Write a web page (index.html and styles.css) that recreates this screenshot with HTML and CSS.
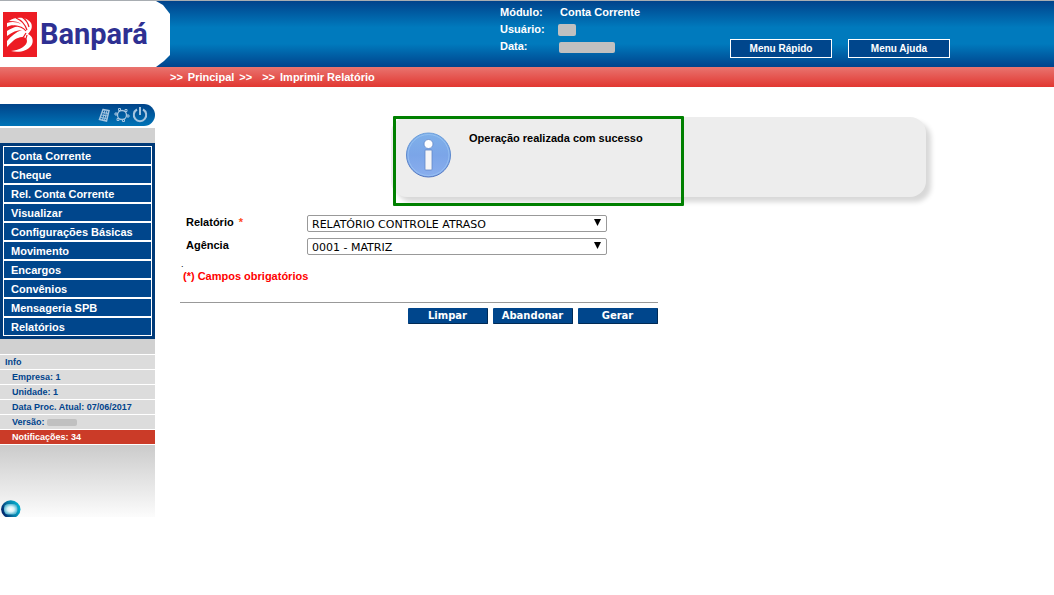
FILE: index.html
```html
<!DOCTYPE html>
<html lang="pt-BR">
<head>
<meta charset="utf-8">
<meta name="viewport" content="width=device-width, initial-scale=1">
<title>Banpará - Imprimir Relatório</title>
<link rel="stylesheet" href="styles.css">
</head>
<body>
<header class="header">
  <div class="brand">
    <svg class="brand-mark" viewBox="0 0 34 45" aria-hidden="true">
      <rect width="34" height="45" fill="#ed1c24"/>
      <path d="M6 9C13 4 24 5 28 11c2 4 0 8-3 11 5 2 6 8 3 12-4 5-12 7-20 5 9-1 16-5 16-10 0-4-5-5-9-3-4 1-7 5-11 9v-6c4-5 9-9 15-11-5 0-10 2-15 6v-5c3-2 7-4 11-5-4-1-8-1-11 1v-4c5-2 10-1 14 1-2-2-6-3-12-3z" fill="#fff"/>
      <path d="M13 6c5 2 9 6 11 12M19 5c3 2 6 6 7 10M11 14c5 0 9 1 12 5M12 31c5-2 9-6 11-10M13 37c6-3 10-7 11-14" fill="none" stroke="#ed1c24" stroke-width="1.200"/>
    </svg>
    <span class="brand-name">Banpará</span>
  </div>
  <dl class="session">
    <dt>Módulo:</dt><dd>Conta Corrente</dd>
    <dt>Usuário:</dt><dd><span class="mask mask-user"></span></dd>
    <dt>Data:</dt><dd><span class="mask mask-date"></span></dd>
  </dl>
  <div class="quick">
    <button type="button" class="quick-button">Menu Rápido</button>
    <button type="button" class="quick-button">Menu Ajuda</button>
  </div>
</header>
<nav class="crumbs" aria-label="Navegação">
  <span>&gt;&gt;</span><a href="#">Principal</a><span>&gt;&gt;</span>
  <span class="crumb-next">&gt;&gt;</span><a href="#">Imprimir Relatório</a>
</nav>
<div class="layout">
  <aside class="sidebar">
    <div class="tools">
      <button type="button" class="tool" aria-label="Calculadora">
        <svg viewBox="0 0 16 16"><path d="M7 2.500l6 1-2.500 10.500-7-1.500z" fill="none" stroke="currentColor" stroke-width="1.500"/><path d="M6.500 5.500l6 1M5.500 8l6 1M4.500 10.500l6 1M9 3L6.500 13M11 3.500L8.500 13.500" stroke="currentColor"/></svg>
      </button>
      <button type="button" class="tool" aria-label="Configurações">
        <svg viewBox="0 0 16 16" fill="none" stroke="currentColor"><circle cx="8" cy="8" r="4.500" stroke-width="1.300"/><path d="M4.500 1.500h2v2h-2zM11 2.500h2v2h-2zM13 8h2v2h-2zM8.500 12.500h2v2h-2zM3 11.500h2v2H3zM1 6h2v2H1z"/></svg>
      </button>
      <button type="button" class="tool" aria-label="Sair">
        <svg viewBox="0 0 16 16" fill="none" stroke="currentColor" stroke-width="2"><path d="M5 2.500a6.200 6.200 0 1 0 6 0M8 0v8"/></svg>
      </button>
    </div>
    <div class="band"></div>
    <ul class="menu">
      <li><a href="#">Conta Corrente</a></li>
      <li><a href="#">Cheque</a></li>
      <li><a href="#">Rel. Conta Corrente</a></li>
      <li><a href="#">Visualizar</a></li>
      <li><a href="#">Configurações Básicas</a></li>
      <li><a href="#">Movimento</a></li>
      <li><a href="#">Encargos</a></li>
      <li><a href="#">Convênios</a></li>
      <li><a href="#">Mensageria SPB</a></li>
      <li><a href="#">Relatórios</a></li>
    </ul>
    <div class="band"></div>
    <ul class="info">
      <li class="info-title">Info</li>
      <li>Empresa: 1</li>
      <li>Unidade: 1</li>
      <li>Data Proc. Atual: 07/06/2017</li>
      <li>Versão: <span class="mask mask-version"></span></li>
      <li class="info-alert"><a href="#">Notificações: 34</a></li>
    </ul>
    <div class="fade">
      <svg class="orb" viewBox="0 0 20 20" aria-hidden="true">
        <defs>
          <linearGradient id="orb-ring" x1="0" y1=".7" x2="1" y2=".3"><stop offset="0" stop-color="#001a66"/><stop offset=".5" stop-color="#087ba5"/><stop offset="1" stop-color="#00b5d4"/></linearGradient>
          <radialGradient id="orb-core"><stop offset="0" stop-color="#fff"/><stop offset=".5" stop-color="#d7f3f8"/><stop offset="1" stop-color="#5db9d3"/></radialGradient>
        </defs>
        <ellipse cx="9.800" cy="10.300" rx="9.700" ry="9" fill="url(#orb-ring)"/>
        <rect x="3" y="5" width="13.500" height="10.500" rx="4.500" fill="url(#orb-core)"/>
      </svg>
    </div>
  </aside>
  <main class="content">
    <section class="message" role="status">
      <svg class="message-icon" viewBox="0 0 46 46" aria-hidden="true">
        <defs>
          <linearGradient id="info-fill" x1="0" y1="0" x2="0" y2="1"><stop offset="0" stop-color="#7fb0e9"/><stop offset=".5" stop-color="#7ba5e8"/><stop offset="1" stop-color="#8aaeee"/></linearGradient>
          <linearGradient id="info-edge" x1="0" y1="0" x2="0" y2="1"><stop offset="0" stop-color="#6b9fdc"/><stop offset="1" stop-color="#4d72bd"/></linearGradient>
        </defs>
        <circle cx="22.500" cy="23" r="22" fill="url(#info-fill)" stroke="url(#info-edge)"/>
        <circle cx="22.500" cy="23" r="20.500" fill="none" stroke="#9cc8f3" stroke-opacity=".7"/>
        <circle cx="22.500" cy="12" r="4.500" fill="#fff" stroke="#6288c8" stroke-width=".8"/>
        <rect x="19" y="18" width="7" height="20" rx=".8" fill="#f5f5f7" stroke="#6288c8" stroke-width=".8"/>
      </svg>
      <p class="message-text">Operação realizada com sucesso</p>
      <div class="highlight"></div>
    </section>
    <form class="report">
      <div class="field">
        <label for="relatorio">Relatório <span class="required">*</span></label>
        <div class="select"><select id="relatorio"><option>RELATÓRIO CONTROLE ATRASO</option></select></div>
      </div>
      <div class="field">
        <label for="agencia">Agência</label>
        <div class="select"><select id="agencia"><option>0001 - MATRIZ</option></select></div>
      </div>
      <div class="dot">.</div>
      <p class="note">(*) Campos obrigatórios</p>
      <div class="actions">
        <button type="reset">Limpar</button>
        <button type="button">Abandonar</button>
        <button type="submit">Gerar</button>
      </div>
    </form>
  </main>
</div>
</body>
</html>
```
FILE: styles.css
```css
* { box-sizing: border-box; }
body {
  margin: 0;
  background: #fff;
  color: #000;
  font: bold 11px/17px "Liberation Sans", Arial, sans-serif;
}
ul, dl, dd, p { margin: 0; padding: 0; }
ul { list-style: none; }
a { color: inherit; text-decoration: none; }
button { cursor: pointer; }

.header {
  display: flex;
  height: 67px;
  border-top: 1px solid #a8adb2;
  background: linear-gradient(#00438c, #007abd 40%, #007abd 65%, #00438c);
  color: #fff;
}
.brand {
  display: flex;
  flex: none;
  align-items: center;
  gap: 3px;
  width: 170px;
  padding-left: 3px;
  background: #fff;
  clip-path: polygon(0 0, 156px 0, 163px 4px, 170px 13px, 170px 54px, 164px 60px, 156px 100%, 0 100%);
}
.brand-mark { flex: none; width: 34px; height: 45px; }
.brand-name {
  color: #2e3092;
  font: bold 29px/40px Roboto, "Liberation Sans", sans-serif;
}
.session {
  display: grid;
  grid-template-columns: 60px 170px;
  grid-auto-rows: 17px;
  align-content: start;
  margin-left: 330px;
  padding-top: 3px;
}
.mask {
  display: inline-block;
  border-radius: 2px;
  background: #c0c0c0;
  vertical-align: middle;
}
.mask-user { width: 18px; height: 12px; margin-left: -2px; }
.mask-date { width: 56px; height: 11px; margin-left: -1px; }
.mask-version { width: 30px; height: 7px; }
.quick { display: flex; gap: 16px; padding-top: 38px; }
.quick-button {
  width: 102px;
  height: 19px;
  padding: 0;
  border: 1px solid #fff;
  background: #00468c;
  color: #fff;
  font: bold 10px/17px "Liberation Sans", Arial, sans-serif;
}
.crumbs {
  display: flex;
  gap: 5px;
  height: 20px;
  padding-left: 170px;
  background: linear-gradient(#e9746f, #e13731);
  color: #fff;
  line-height: 20px;
}
.crumb-next { margin-left: 5px; }

.layout { display: flex; padding-top: 17px; }
.sidebar { flex: none; width: 155px; }
.tools {
  display: flex;
  justify-content: flex-end;
  align-items: center;
  gap: 2px;
  height: 22px;
  margin-bottom: 2px;
  padding-right: 7px;
  border-radius: 0 11px 11px 0;
  background: linear-gradient(#004389, #0074b7);
}
.tool {
  width: 16px;
  height: 16px;
  padding: 0;
  border: 0;
  background: none;
  color: #a5c5e0;
}
.tool svg { display: block; width: 16px; height: 16px; }
.band { height: 15px; background: #d1d1d1; }
.menu { padding: 3px; background: #003a78; }
.menu li {
  height: 19px;
  border: 1px solid #fff;
  background: #00468c;
  color: #fff;
}
.menu a { display: block; padding-left: 7px; line-height: 18px; }
.info { color: #00438c; font-size: 9px; line-height: 14px; }
.info li {
  height: 15px;
  padding-left: 12px;
  border-top: 1px solid #fff;
  background: #dcdcdc;
}
.info .info-title { padding-left: 5px; }
.info .info-alert { background: #cb3b28; color: #fff; }
.fade {
  display: flex;
  align-items: flex-end;
  height: 73px;
  border-top: 1px solid #fff;
  background: linear-gradient(#cbcbcb, #fcfcfc);
}
.orb { width: 20px; height: 20px; margin-left: 1px; margin-bottom: -2px; }

.content { flex: 1; padding: 13px 25px; }
.message {
  position: relative;
  display: flex;
  gap: 17px;
  width: 535px;
  max-width: 100%;
  height: 80px;
  margin-left: 211px;
  padding: 15px;
  border-radius: 16px;
  background: #ededed;
  box-shadow: 5px 5px 5px #d8d8d8;
}
.message-icon { flex: none; width: 46px; height: 46px; }
.message-text { margin-top: -2px; }
.highlight {
  position: absolute;
  top: -1px;
  left: 2px;
  width: 291px;
  height: 90px;
  border: 3px solid #008000;
  border-radius: 1px;
}
.report { max-width: 478px; margin-top: 17px; }
.field {
  display: flex;
  height: 23px;
  padding-left: 6px;
}
.field label { width: 121px; }
.required { margin-left: 2px; color: #ff4a20; }
.select { position: relative; width: 300px; }
.select::after {
  content: "";
  position: absolute;
  top: 5px;
  right: 6px;
  width: 7px;
  height: 7px;
  background: #000;
  clip-path: polygon(0 0, 100% 0, 50% 100%);
  pointer-events: none;
}
.select select {
  display: block;
  appearance: none;
  width: 100%;
  height: 17px;
  margin-top: 1px;
  padding: 1px 20px 0 4px;
  border: 1px solid #999;
  border-radius: 2px;
  background: #fff;
  color: #000;
  font: 11px/15px "DejaVu Sans", Verdana, sans-serif;
}
.dot { padding-left: 1px; font-weight: normal; font-size: 9px; line-height: 8px; }
.note { padding-left: 3px; color: #f00; }
.actions {
  display: flex;
  justify-content: flex-end;
  gap: 5px;
  margin-top: 17px;
  padding-top: 5px;
  border-top: 1px solid #999;
}
.actions button {
  width: 80px;
  height: 16px;
  padding: 1px 0 0;
  border: 0;
  border-right: 1px solid #002a55;
  border-bottom: 1px solid #002a55;
  border-radius: 1px;
  background: #00468c;
  color: #fff;
  font: bold 10px/14px "DejaVu Sans", Verdana, sans-serif;
}
```
